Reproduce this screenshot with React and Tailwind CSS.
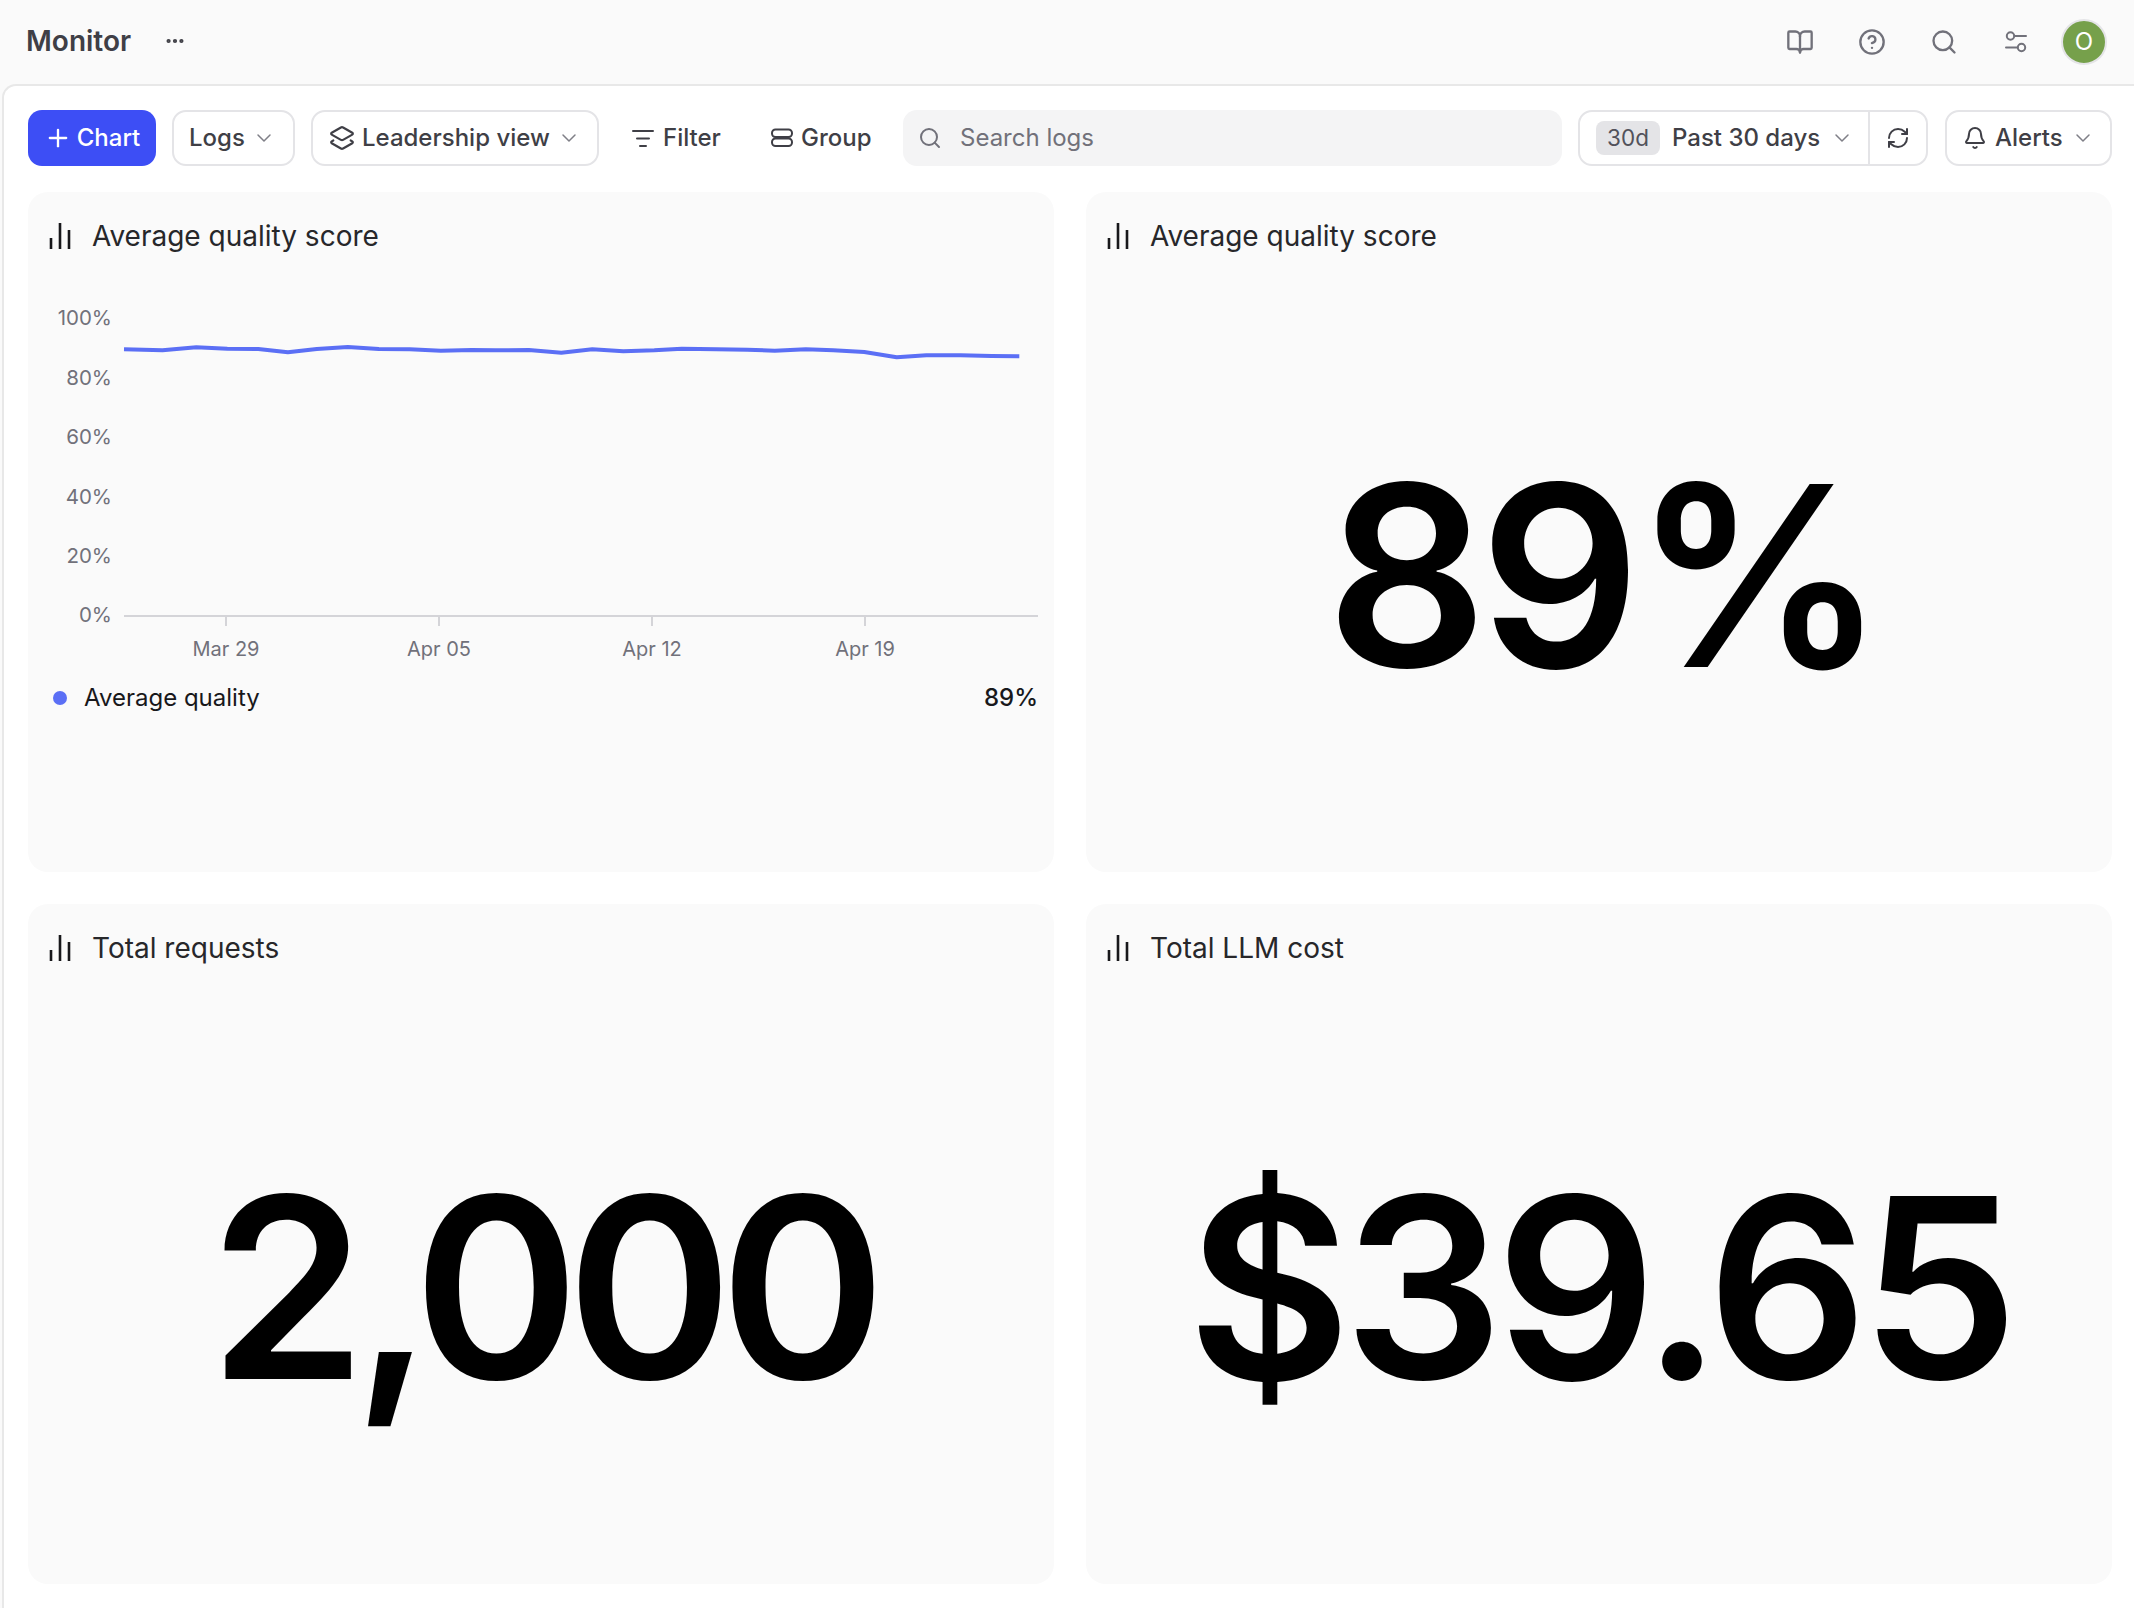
import React from "react";
import { Plus, ChevronDown, Layers2, BookOpen, CircleHelp, Search, RefreshCw, Bell, Ellipsis } from "lucide-react";

const F = { fontFamily: "Inter, sans-serif" };

function Bars() {
  return (
    <svg width="24" height="26" viewBox="0 0 24 26" className="shrink-0" fill="none" stroke="#18181b" strokeWidth="2.6" strokeLinecap="butt">
      <path d="M3 15V26M12 0V26M21 7V26" />
    </svg>
  );
}

function FilterIcon() {
  return (
    <svg width="24" height="24" viewBox="0 0 24 24" className="shrink-0" fill="none" stroke="#3f3f46" strokeWidth="2" strokeLinecap="round">
      <path d="M2 5H22M6 12.5H18M9 20H15" />
    </svg>
  );
}

function GroupIcon() {
  return (
    <svg width="24" height="24" viewBox="0 0 24 24" className="shrink-0" fill="none" stroke="#3f3f46" strokeWidth="2">
      <rect x="2" y="3.5" width="20" height="7.5" rx="3.5" />
      <rect x="2" y="12.5" width="20" height="7.5" rx="3.5" />
    </svg>
  );
}

function SliderIcon() {
  return (
    <svg width="22" height="22" viewBox="0 0 22 22" fill="none" stroke="#71717a" strokeWidth="2" strokeLinecap="round">
      <circle cx="5.5" cy="5" r="3.7" />
      <path d="M9.5 5H21" />
      <circle cx="16.5" cy="16.5" r="3.7" />
      <path d="M1 16.5H12.5" />
    </svg>
  );
}

const pts = [[180,208],[236,211],[285,202],[330,206],[375,207],[418,217],[460,207],[505,201],[550,207],[595,208],[640,212],[685,210],[720,211],[768,210],[815,218],[860,208],[905,214],[950,211],[990,206],[1040,208],[1085,209],[1125,212],[1170,208],[1210,211],[1255,216],[1302,232],[1345,226],[1395,226],[1440,228],[1480,229]];

function Chart() {
  const d = pts.map(([x, y]) => `${(x / 1.452 - 28).toFixed(1)},${(y / 3 + 280 - 290).toFixed(1)}`).join(" ");
  const ys = [["100%", 28], ["80%", 87.5], ["60%", 147], ["40%", 206.5], ["20%", 266], ["0%", 325]];
  const xs = [["Mar 29", 198], ["Apr 05", 411], ["Apr 12", 624], ["Apr 19", 837]];
  return (
    <svg width="1026" height="376" viewBox="0 0 1026 376" className="block mt-[10px] shrink-0" style={F}>
      {ys.map(([t, y]) => (
        <text key={t} x="84" y={y} dy="7" textAnchor="end" fontSize="20.5" fill="#71717a">{t}</text>
      ))}
      <path d="M96 326H1010" stroke="#d4d4d8" strokeWidth="2" />
      {xs.map(([t, x]) => (
        <g key={t}>
          <path d={`M${x} 326V336`} stroke="#d4d4d8" strokeWidth="2" />
          <text x={x} y="366" textAnchor="middle" fontSize="20" fill="#71717a">{t}</text>
        </g>
      ))}
      <polyline points={d} fill="none" stroke="#5b6ff5" strokeWidth="4" strokeLinejoin="round" strokeLinecap="butt" />
    </svg>
  );
}

function Card({ title, children }) {
  return (
    <div className="flex flex-col bg-[#fafafa] rounded-[20px] h-[680px] min-w-0">
      <div className="flex items-center gap-[20px] h-[88px] pl-[20px] shrink-0 text-[28px] text-[#27272a]">
        <Bars />
        <span>{title}</span>
      </div>
      {children}
    </div>
  );
}

function Big({ children, extra }) {
  return (
    <div className={`flex-1 flex items-center justify-center text-[252px] font-semibold text-black leading-none ${extra}`}>
      {children}
    </div>
  );
}

const btn = "flex items-center h-[56px] rounded-[14px] border-2 border-[#e4e4e7] bg-white text-[24px] font-[450] text-[#3f3f46]";
const chev = "text-[#7f7f87] shrink-0";

export default function App() {
  return (
    <div className="w-[2134px] h-[1608px] bg-[#fafafa] overflow-hidden flex flex-col" style={F}>
      <header className="h-[84px] shrink-0 flex items-center pl-[26px] pr-[27px]">
        <span className="text-[28px] font-semibold text-[#3f3f46] -mt-[2px]">Monitor</span>
        <Ellipsis className="ml-[33px] text-[#3f3f46] -mt-[2px]" size={22} strokeWidth={2.6} />
        <div className="ml-auto flex items-center">
          <BookOpen size={28} strokeWidth={2} className="text-[#71717a] mr-[44px]" />
          <CircleHelp size={28} strokeWidth={2} className="text-[#71717a] mr-[44px]" />
          <Search size={28} strokeWidth={2} className="text-[#71717a] mr-[47px]" />
          <SliderIcon />
          <div className="ml-[34px] w-[46px] h-[46px] rounded-full bg-[#76a04b] border-2 border-[#e4e4e7] flex items-center justify-center text-white text-[24px]">O</div>
        </div>
      </header>
      <main className="flex-1 ml-[2px] border-l-2 border-t-2 border-[#e8e8e8] rounded-tl-[14px] bg-white pl-[24px] pr-[22px] pt-[24px] flex flex-col gap-[26px] min-h-0">
        <div className="flex items-center h-[56px] shrink-0">
          <button className="flex items-center h-[56px] w-[128px] justify-center gap-[5px] rounded-[14px] bg-[#3d4ef5] text-white text-[24px] font-medium">
            <Plus size={28} strokeWidth={2} />
            Chart
          </button>
          <div className={`${btn} ml-[16px] w-[123px] pl-[15px] gap-[7px]`}>
            Logs <ChevronDown size={24} strokeWidth={1.5} className={chev} />
          </div>
          <div className={`${btn} ml-[16px] w-[288px] pl-[16px] gap-[7px]`}>
            <Layers2 size={26} strokeWidth={2} className="shrink-0" />
            <span className="whitespace-nowrap">Leadership view</span>
            <ChevronDown size={24} strokeWidth={1.5} className={chev} />
          </div>
          <div className="flex items-center ml-[32px] w-[90px] gap-[8px] text-[24px] font-[450] text-[#3f3f46]">
            <FilterIcon /> Filter
          </div>
          <div className="flex items-center ml-[49px] w-[101px] gap-[7px] text-[24px] font-[450] text-[#3f3f46]">
            <GroupIcon /> Group
          </div>
          <div className="flex items-center ml-[32px] w-[659px] h-[56px] rounded-[14px] bg-[#f4f4f5] pl-[15px] gap-[18px] text-[24px] text-[#71717a]">
            <Search size={24} strokeWidth={2} />
            Search logs
          </div>
          <div className={`${btn} ml-[16px] w-[350px]`}>
            <div className="flex items-center flex-1 pl-[16px] gap-[12px]">
              <span className="w-[64px] justify-center h-[34px] rounded-[8px] bg-[#e4e4e7] text-[22.5px] font-normal flex items-center text-[#52525b]">30d</span>
              <span className="whitespace-nowrap">Past 30 days</span>
              <ChevronDown size={24} strokeWidth={1.5} className={`${chev} -ml-[2px]`} />
            </div>
            <div className="w-[58px] h-full border-l-2 border-[#e4e4e7] flex items-center justify-center">
              <RefreshCw size={24} strokeWidth={2} />
            </div>
          </div>
          <div className={`${btn} ml-[17px] w-[167px] pl-[16px] gap-[8px]`}>
            <Bell size={24} strokeWidth={2} className="shrink-0" /> Alerts <ChevronDown size={24} strokeWidth={1.5} className={chev} />
          </div>
        </div>
        <div className="grid grid-cols-2 gap-x-[32px] gap-y-[32px]">
          <Card title="Average quality score">
            <Chart />
            <div className="flex items-center justify-between pl-[25px] pr-[16px] mt-[14px] text-[24px] text-[#18181b]">
              <div className="flex items-center gap-[17px]">
                <span className="w-[14px] h-[14px] rounded-full bg-[#5b6ff5]" />
                Average quality
              </div>
              <span className="font-medium">89%</span>
            </div>
          </Card>
          <Card title="Average quality score"><Big extra="tracking-[-8px] pl-[6px]">89%</Big></Card>
          <Card title="Total requests"><Big extra="tracking-[-13px]">2,000</Big></Card>
          <Card title="Total LLM cost"><Big extra="tracking-[-8px]">$39.65</Big></Card>
        </div>
      </main>
    </div>
  );
}
